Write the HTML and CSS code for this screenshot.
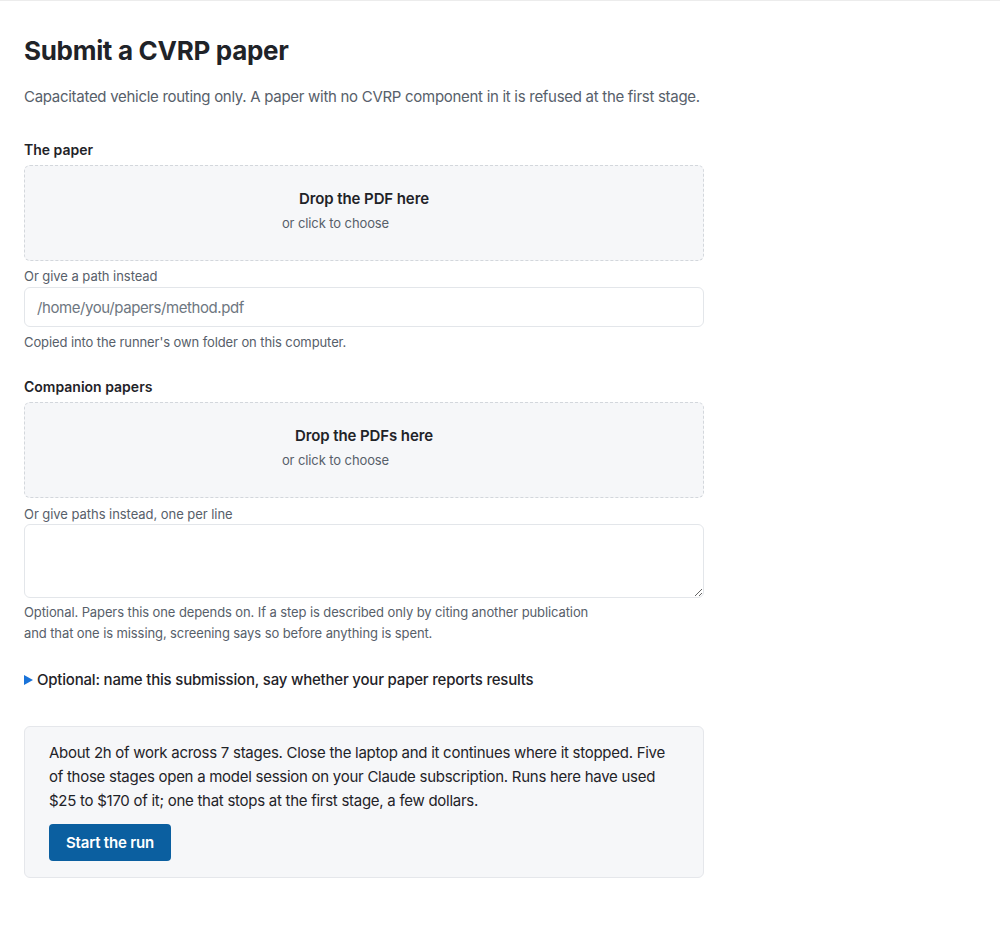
FILE: index.html
```html
<!DOCTYPE html>
<html lang="en">
<head>
<meta charset="utf-8">
<title>Submit a CVRP paper</title>
<link rel="stylesheet" href="styles.css">
</head>
<body>
<main class="page">
  <h1 class="title">Submit a CVRP paper</h1>
  <p class="lead">Capacitated vehicle routing only. A paper with no CVRP component in it is refused at the first stage.</p>

  <section class="field field-first">
    <div class="label">The paper</div>
    <div class="drop">
      <div class="drop-main">Drop the PDF here</div>
      <div class="drop-sub"><span class="drop-hint">or click to choose</span><span class="drop-gap"></span></div>
    </div>
    <div class="sublabel">Or give a path instead</div>
    <input class="text-input" type="text" placeholder="/home/you/papers/method.pdf">
    <div class="hint">Copied into the runner's own folder on this computer.</div>
  </section>

  <section class="field">
    <div class="label">Companion papers</div>
    <div class="drop">
      <div class="drop-main">Drop the PDFs here</div>
      <div class="drop-sub"><span class="drop-hint">or click to choose</span><span class="drop-gap"></span></div>
    </div>
    <div class="sublabel sublabel-tight">Or give paths instead, one per line</div>
    <textarea class="text-area"></textarea>
    <div class="hint hint-wide">Optional. Papers this one depends on. If a step is described only by citing another publication and that one is missing, screening says so before anything is spent.</div>
  </section>

  <details class="extra">
    <summary><span class="tri"></span>Optional: name this submission, say whether your paper reports results</summary>
  </details>

  <div class="run-box">
    <p class="run-text">About 2h of work across 7 stages. Close the laptop and it continues where it stopped. Five of those stages open a model session on your Claude subscription. Runs here have used $25 to $170 of it; one that stops at the first stage, a few dollars.</p>
    <button class="run-btn" type="button">Start the run</button>
  </div>
</main>
</body>
</html>
```
FILE: styles.css
```css
html, body {
  margin: 0;
  padding: 0;
  background: #ffffff;
}
body {
  border-top: 1px solid #ececec;
  font-family: Inter, "Liberation Sans", sans-serif;
  color: #1f2328;
}
.page {
  width: 680px;
  padding: 34px 24px 40px;
}
.title {
  margin: 0;
  font-size: 26px;
  line-height: 32px;
  font-weight: 700;
  letter-spacing: -0.3px;
  color: #1f2328;
}
.lead {
  margin: 19px 0 0;
  font-size: 15px;
  line-height: 22px;
  letter-spacing: -0.29px;
  color: #57606a;
}
.field {
  margin-top: 26px;
}
.field-first {
  margin-top: 32px;
}
.label {
  font-size: 14px;
  line-height: 20px;
  font-weight: 600;
  margin-bottom: 5px;
}
.drop {
  box-sizing: border-box;
  height: 96px;
  border: 1px dashed #d3d7dc;
  border-radius: 6px;
  background: #f6f7f9;
  text-align: center;
  padding-top: 22px;
}
.drop-main {
  font-size: 15px;
  line-height: 22px;
  font-weight: 600;
  letter-spacing: -0.1px;
}
.drop-sub {
  margin-top: 3px;
  font-size: 13px;
  line-height: 20px;
  letter-spacing: -0.1px;
  color: #57606a;
}
.drop-gap {
  display: inline-block;
  width: 57px;
}
.sublabel {
  margin: 6px 0 2px;
  font-size: 13px;
  line-height: 18px;
  letter-spacing: -0.05px;
  color: #57606a;
}
.sublabel-tight {
  margin: 7px 0 1px;
}
.text-input {
  display: block;
  box-sizing: border-box;
  width: 100%;
  height: 40px;
  margin: 0;
  padding: 0 12px;
  border: 1px solid #e3e6ea;
  border-radius: 6px;
  font-family: inherit;
  font-size: 15px;
  letter-spacing: -0.42px;
  color: #1f2328;
  background: #ffffff;
  outline: none;
}
.text-input::placeholder {
  color: #6e7781;
}
.text-area {
  display: block;
  box-sizing: border-box;
  width: 100%;
  height: 74px;
  margin: 0;
  padding: 8px 12px;
  border: 1px solid #e3e6ea;
  border-radius: 6px;
  font-family: inherit;
  font-size: 15px;
  background: #ffffff;
  outline: none;
}
.hint {
  margin-top: 6px;
  font-size: 13px;
  line-height: 18px;
  letter-spacing: -0.1px;
  color: #57606a;
}
.hint-wide {
  margin-top: 4px;
  line-height: 21px;
  max-width: 580px;
}
.extra {
  margin-top: 25px;
}
.extra summary {
  display: block;
  list-style: none;
  font-size: 15px;
  line-height: 22px;
  font-weight: 500;
  letter-spacing: -0.2px;
  cursor: pointer;
}
.extra summary::-webkit-details-marker {
  display: none;
}
.tri {
  display: inline-block;
  width: 0;
  height: 0;
  border-left: 9px solid #1a73d9;
  border-top: 5px solid transparent;
  border-bottom: 5px solid transparent;
  margin-right: 4px;
  vertical-align: 0;
}
.run-box {
  margin-top: 35px;
  border: 1px solid #e5e7eb;
  border-radius: 6px;
  background: #f6f7f9;
  padding: 14px 24px 16px;
}
.run-text {
  margin: 0;
  font-size: 15px;
  line-height: 24px;
  letter-spacing: -0.27px;
  color: #1f2328;
}
.run-btn {
  margin-top: 11px;
  height: 37px;
  padding: 0 17px;
  border: none;
  border-radius: 4px;
  background: #0b5fa0;
  color: #ffffff;
  font-family: inherit;
  font-size: 15px;
  font-weight: 600;
  letter-spacing: -0.2px;
  cursor: pointer;
}
```
